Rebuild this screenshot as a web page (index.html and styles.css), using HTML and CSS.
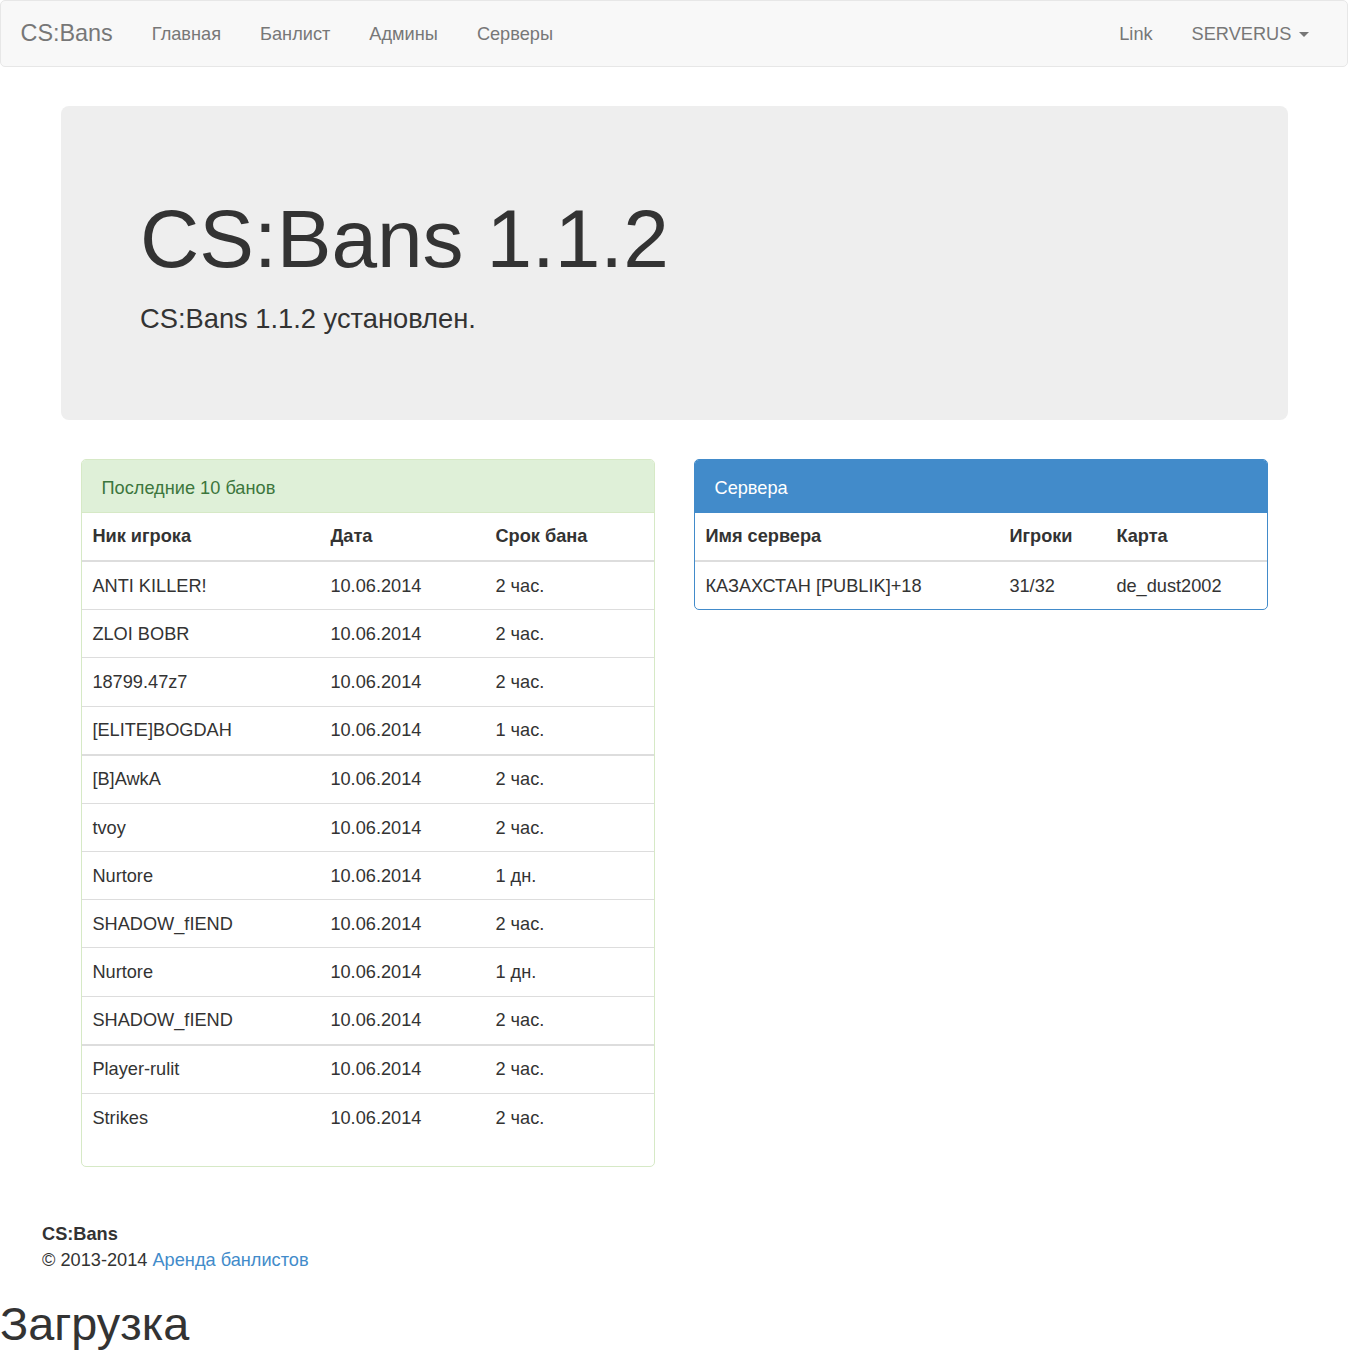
FILE: index.html
```html
<!DOCTYPE html>
<html lang="ru">
<head>
<meta charset="utf-8">
<title>CS:Bans</title>
<link rel="stylesheet" href="styles.css">
</head>
<body>
<nav class="navbar">
  <a class="brand" href="#">CS:Bans</a>
  <ul class="nav">
    <li><a href="#">Главная</a></li>
    <li><a href="#">Банлист</a></li>
    <li><a href="#">Админы</a></li>
    <li><a href="#">Серверы</a></li>
  </ul>
  <ul class="nav nav-right">
    <li><a href="#">Link</a></li>
    <li><a href="#">SERVERUS <b class="caret"></b></a></li>
  </ul>
</nav>

<main class="container">
  <section class="jumbotron">
    <h1>CS:Bans 1.1.2</h1>
    <p>CS:Bans 1.1.2 установлен.</p>
  </section>

  <div class="row">
    <div class="panel panel-success">
      <div class="panel-heading">Последние 10 банов</div>
      <table class="table table-bans">
        <thead>
          <tr><th class="c-nick">Ник игрока</th><th class="c-date">Дата</th><th>Срок бана</th></tr>
        </thead>
        <tbody>
          <tr><td>ANTI KILLER!</td><td>10.06.2014</td><td>2 час.</td></tr>
          <tr><td>ZLOI BOBR</td><td>10.06.2014</td><td>2 час.</td></tr>
          <tr><td>18799.47z7</td><td>10.06.2014</td><td>2 час.</td></tr>
          <tr><td>[ELITE]BOGDAH</td><td>10.06.2014</td><td>1 час.</td></tr>
        </tbody>
        <tbody>
          <tr><td>[B]AwkA</td><td>10.06.2014</td><td>2 час.</td></tr>
          <tr><td>tvoy</td><td>10.06.2014</td><td>2 час.</td></tr>
          <tr><td>Nurtore</td><td>10.06.2014</td><td>1 дн.</td></tr>
          <tr><td>SHADOW_fIEND</td><td>10.06.2014</td><td>2 час.</td></tr>
          <tr><td>Nurtore</td><td>10.06.2014</td><td>1 дн.</td></tr>
          <tr><td>SHADOW_fIEND</td><td>10.06.2014</td><td>2 час.</td></tr>
        </tbody>
        <tbody>
          <tr><td>Player-rulit</td><td>10.06.2014</td><td>2 час.</td></tr>
          <tr><td>Strikes</td><td>10.06.2014</td><td>2 час.</td></tr>
        </tbody>
      </table>
    </div>

    <div class="panel panel-primary">
      <div class="panel-heading">Сервера</div>
      <table class="table">
        <thead>
          <tr><th class="c-server">Имя сервера</th><th class="c-players">Игроки</th><th>Карта</th></tr>
        </thead>
        <tbody>
          <tr><td>КАЗАХСТАН [PUBLIK]+18</td><td>31/32</td><td>de_dust2002</td></tr>
        </tbody>
      </table>
    </div>
  </div>
</main>

<footer class="footer">
  <div class="footer-title">CS:Bans</div>
  <div>© 2013-2014 <a href="#">Аренда банлистов</a></div>
</footer>

<h1 class="loading">Загрузка</h1>
</body>
</html>
```

FILE: styles.css
```css
* {
  box-sizing: border-box;
}

html, body {
  margin: 0;
  padding: 0;
}

body {
  font-family: "Liberation Sans", Arial, sans-serif;
  font-size: 18.2px;
  line-height: 26px;
  color: #333;
  background: #fff;
}

a {
  color: #428bca;
  text-decoration: none;
}

/* Navbar */
.navbar {
  display: flex;
  align-items: stretch;
  height: 67px;
  background: #f8f8f8;
  border: 1px solid #e7e7e7;
  border-radius: 5px;
  padding: 0 18.5px 0 0;
}

.brand {
  display: block;
  padding: 0 19.5px;
  font-size: 23.4px;
  line-height: 65px;
  color: #777;
}

.nav {
  display: flex;
  list-style: none;
  margin: 0;
  padding: 0;
}

.nav a {
  display: block;
  padding: 19.5px 19.5px;
  line-height: 26px;
  color: #777;
}

.nav-right {
  margin-left: auto;
}

.caret {
  display: inline-block;
  width: 0;
  height: 0;
  margin-left: 2.6px;
  vertical-align: middle;
  border-top: 5.2px solid #777;
  border-left: 5.2px solid transparent;
  border-right: 5.2px solid transparent;
}

/* Container */
.container {
  margin: 39px 60px 0 61px;
}

.jumbotron {
  background: #eee;
  border-radius: 8px;
  padding: 62.4px 79px;
  margin-bottom: 38.5px;
}

.jumbotron h1 {
  margin: 26px 0 15px;
  font-size: 82px;
  font-weight: 400;
  line-height: 90px;
  color: #333;
}

.jumbotron p {
  margin: 0 0 19.5px;
  font-size: 27.3px;
  line-height: 39px;
  font-weight: 200;
}

/* Panels */
.row {
  display: grid;
  grid-template-columns: 574px 574px;
  column-gap: 39px;
  align-items: start;
  padding: 0 20px;
}

.panel {
  border: 1px solid #ddd;
  border-radius: 5px;
  background: #fff;
  overflow: hidden;
  margin-bottom: 26px;
}

.panel-heading {
  padding: 15px 19.5px 11px;
  line-height: 26px;
  border-bottom: 1px solid transparent;
}

.panel-success {
  border-color: #d6e9c6;
}

.panel-success .panel-heading {
  background: #dff0d8;
  color: #3c763d;
  border-bottom-color: #d6e9c6;
}

.panel-primary {
  border-color: #428bca;
}

.panel-primary .panel-heading {
  background: #428bca;
  color: #fff;
  border-bottom-color: #428bca;
}

/* Tables */
.table {
  width: 100%;
  border-collapse: collapse;
  table-layout: fixed;
  margin: 0;
}

.table-bans {
  margin-bottom: 25px;
}

.table th,
.table td {
  padding: 10.6px 10.4px;
  line-height: 26px;
  text-align: left;
  vertical-align: top;
  white-space: nowrap;
}

.table th {
  font-weight: 700;
  border-bottom: 2px solid #ddd;
}

.table td {
  border-top: 1px solid #ddd;
}

.table tbody + tbody {
  border-top: 2px solid #ddd;
}

.table tbody + tbody tr:first-child td {
  border-top: 2px solid #ddd;
}

.c-nick { width: 238px; }
.c-date { width: 165px; }
.c-server { width: 304px; }
.c-players { width: 107px; }

/* Footer */
.footer {
  padding: 0 42px;
  margin-top: 28px;
}

.footer-title {
  font-weight: 700;
}

.loading {
  margin: 26px 0 0;
  font-size: 46.8px;
  font-weight: 400;
  line-height: 51.5px;
  color: #333;
}
```
